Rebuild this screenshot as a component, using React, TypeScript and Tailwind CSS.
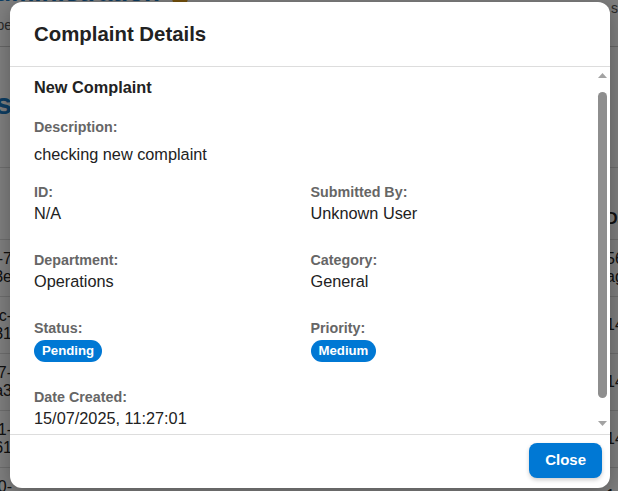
import React from "react";

const rows = [
  { a: ["3f2a1c-7", "9b1d3e"], b: ["56", "ag"] },
  { a: ["7a91bc-", "d4e831"], b: ["14"] },
  { a: ["e2c4f7-", "8b0a3"], b: ["14"] },
  { a: ["5d0e41-", "c7a61"], b: ["14"] },
  { a: ["9f3b20-", "fb4922301"], b: ["14"] },
];

function Field({ label, children }: { label: string; children: React.ReactNode }) {
  return (
    <div className="flex flex-col">
      <div className="text-[14.3px] leading-[18px] font-bold text-[#666666]">{label}</div>
      {children}
    </div>
  );
}

function Badge({ text }: { text: string }) {
  return (
    <div className="mt-[3px] flex">
      <span className="h-[22px] rounded-full bg-[#0078d4] px-2 text-[13.2px] leading-[22px] font-bold text-white">
        {text}
      </span>
    </div>
  );
}

export default function App() {
  return (
    <div
      className="relative h-[491px] w-[618px] overflow-hidden bg-white text-[#222222]"
      style={{ fontFamily: '"Liberation Sans", Arial, sans-serif' }}
    >
      {/* Background page */}
      <div className="flex flex-col">
        <div className="-mt-[22px] flex h-[28px] items-end gap-3">
          <div className="flex w-[160px] justify-end overflow-hidden whitespace-nowrap text-[26px] leading-[28px] font-bold text-[#1a7ac4]">
            Complaints in Administration
          </div>
          <div className="h-[26px] w-[16px] rounded-full bg-[#e8a41a]" />
        </div>
        <div className="-mt-[6px] flex h-[16px] items-center justify-end">
          <div className="text-sm text-[#555555]">s</div>
        </div>
        <div className="flex h-[18px] items-center">
          <div className="flex w-[12px] justify-end overflow-hidden whitespace-nowrap text-sm text-[#555555]">
            Manage complaints pe
          </div>
        </div>
        <div className="mt-[12px] h-px bg-[#cccccc]" />
        <div className="mt-[38px] flex h-[36px] items-center">
          <div className="flex w-[12px] justify-end overflow-hidden whitespace-nowrap text-[30px] font-bold text-[#1a7ac4]">
            Complaints
          </div>
        </div>
        <div className="mt-[46px] h-px bg-[#dddddd]" />
        <div className="h-[30px]" />
        <div className="grid h-[42px] grid-cols-[12px_1fr_12px] items-center border-b border-[#dddddd]">
          <div />
          <div />
          <div className="text-base font-bold whitespace-nowrap">Da</div>
        </div>
        {rows.map((r, i) => (
          <div
            key={i}
            className="grid h-[57px] grid-cols-[12px_1fr_12px] items-center border-b border-[#dddddd] text-base leading-[18px]"
          >
            <div className="flex flex-col items-end overflow-hidden whitespace-nowrap">
              {r.a.map((t) => (
                <div key={t}>{t}</div>
              ))}
            </div>
            <div />
            <div className="flex flex-col overflow-hidden whitespace-nowrap">
              {r.b.map((t) => (
                <div key={t}>{t}</div>
              ))}
            </div>
          </div>
        ))}
      </div>

      {/* Overlay */}
      <div className="absolute inset-0 bg-black/50" />

      {/* Modal */}
      <div className="absolute left-[10px] top-[2px] flex h-[486px] w-[600px] flex-col overflow-hidden rounded-xl bg-white shadow-[0_4px_20px_rgba(0,0,0,0.3)]">
        <div className="border-b border-[#dddddd] px-6 py-[18px]">
          <h2 className="text-[20.4px] leading-7 font-bold text-[#222222]">Complaint Details</h2>
        </div>

        <div className="flex min-h-0 flex-1">
          <div className="min-w-0 flex-1 overflow-hidden">
            <div className="px-6 pt-[8px] pb-[18px]">
              <h3 className="text-[16.3px] leading-6 font-bold text-[#222222]">New Complaint</h3>

              <div className="mt-[19px]">
                <div className="text-[14.3px] leading-[18px] font-bold text-[#666666]">Description:</div>
                <div className="mt-[6px] text-[16.3px] leading-6">checking new complaint</div>
              </div>

              <div className="mt-[17px] grid grid-cols-2 gap-x-4 gap-y-[26px]">
                <Field label="ID:">
                  <div className="text-[16.3px] leading-6">N/A</div>
                </Field>
                <Field label="Submitted By:">
                  <div className="text-[16.3px] leading-6">Unknown User</div>
                </Field>
                <Field label="Department:">
                  <div className="text-[16.3px] leading-6">Operations</div>
                </Field>
                <Field label="Category:">
                  <div className="text-[16.3px] leading-6">General</div>
                </Field>
                <Field label="Status:">
                  <Badge text="Pending" />
                </Field>
                <Field label="Priority:">
                  <Badge text="Medium" />
                </Field>
                <Field label="Date Created:">
                  <div className="text-[16.3px] leading-6">15/07/2025, 11:27:01</div>
                </Field>
              </div>
            </div>
          </div>

          {/* scrollbar */}
          <div className="flex w-[15px] shrink-0 flex-col items-center bg-white pt-[6px] pb-[8px]">
            <svg width="9" height="5" viewBox="0 0 9 5">
              <polygon points="0,5 4.5,0 9,5" fill="#a3a3a3" />
            </svg>
            <div className="mt-[14px] h-[306px] w-[9px] rounded-full bg-[#8e8e8e]" />
            <div className="flex-1" />
            <svg width="9" height="5" viewBox="0 0 9 5">
              <polygon points="0,0 9,0 4.5,5" fill="#a3a3a3" />
            </svg>
          </div>
        </div>

        <div className="flex justify-end border-t border-[#dddddd] pt-2 pr-2 pb-[10px]">
          <button className="h-[35px] rounded-lg bg-[#0078d4] px-4 text-[15px] font-bold text-white shadow-[0_2px_4px_rgba(0,0,0,0.2)]">
            Close
          </button>
        </div>
      </div>
    </div>
  );
}
